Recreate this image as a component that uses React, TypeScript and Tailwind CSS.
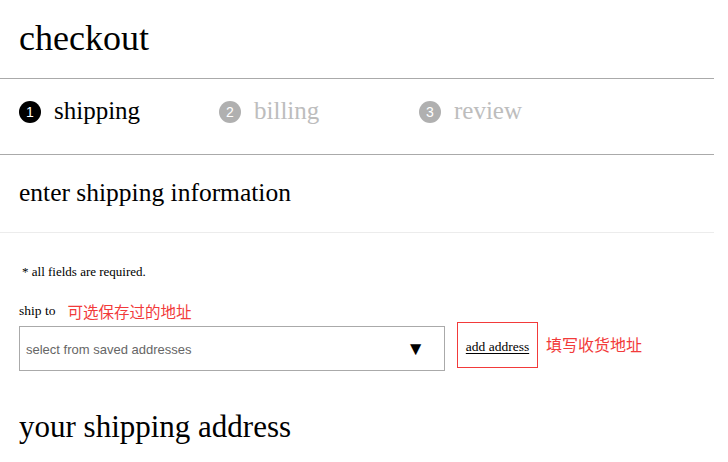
import React from 'react';

const serif = { fontFamily: '"Liberation Serif", "Times New Roman", serif' };

const steps = [
  { n: 1, label: 'shipping', active: true },
  { n: 2, label: 'billing', active: false },
  { n: 3, label: 'review', active: false },
];

export default function App() {
  return (
    <div className="w-[728px] h-[462px] bg-white overflow-hidden text-black font-['Liberation_Serif',serif]">
      <div className="w-[714px]">
        <div className="h-[79px] border-b border-[#aaaaaa] flex items-center pl-[19px]">
          <h1 className="text-[36px] leading-none -mt-[3px]">checkout</h1>
        </div>

        <div className="h-[76px] border-b border-[#aaaaaa] flex items-center pl-[19px] pb-[9px]">
          {steps.map((s) => (
            <div key={s.n} className="w-[200px] flex items-center">
              <span
                className={`w-[22px] h-[22px] rounded-full flex items-center justify-center text-white text-[14px] leading-none font-['Liberation_Sans',Arial,sans-serif] ${
                  s.active ? 'bg-black' : 'bg-[#b0b0b0]'
                }`}
              >
                {s.n}
              </span>
              <span className={`ml-[13px] text-[25px] leading-none -mt-[3px] ${s.active ? 'text-black' : 'text-[#bdbdbd]'}`}>
                {s.label}
              </span>
            </div>
          ))}
        </div>

        <div className="h-[78px] border-b border-[#ececec] flex items-center pl-[19px]">
          <h2 className="text-[25.5px] leading-none -mt-[2px]">enter shipping information</h2>
        </div>

        <div className="pl-[19px]">
          <p className="pt-[32px] pl-[3px] text-[13px] leading-none">* all fields are required.</p>

          <div className="mt-[26px] flex items-end">
            <span className="text-[13.5px] leading-none pb-[2px]">ship to</span>
            <span className="ml-[12px] text-[15.5px] leading-none text-[#f23a3a] font-['Noto_Sans_CJK_SC',sans-serif]">
              可选保存过的地址
            </span>
          </div>

          <div className="mt-[2px] flex items-start">
            <div className="mt-[4px] w-[426px] h-[45px] border border-[#aaaaaa] flex items-center justify-between pl-[6px] pr-[19px]">
              <span className="pt-[3px] text-[13px] text-[#666666] font-['Liberation_Sans',Arial,sans-serif]">select from saved addresses</span>
              <span className="text-[19px] leading-none">▼</span>
            </div>
            <div className="ml-[12px] w-[81px] h-[46px] border border-[#f23a3a] flex items-center justify-center pt-[5px]">
              <a href="#" className="text-[13.5px] underline underline-offset-2" style={serif}>add address</a>
            </div>
            <span className="ml-[8px] mt-[14px] text-[16px] leading-none text-[#f23a3a] font-['Noto_Sans_CJK_SC',sans-serif]">
              填写收货地址
            </span>
          </div>

          <h2 className="mt-[40px] text-[31px] leading-none">your shipping address</h2>
        </div>
      </div>
    </div>
  );
}
